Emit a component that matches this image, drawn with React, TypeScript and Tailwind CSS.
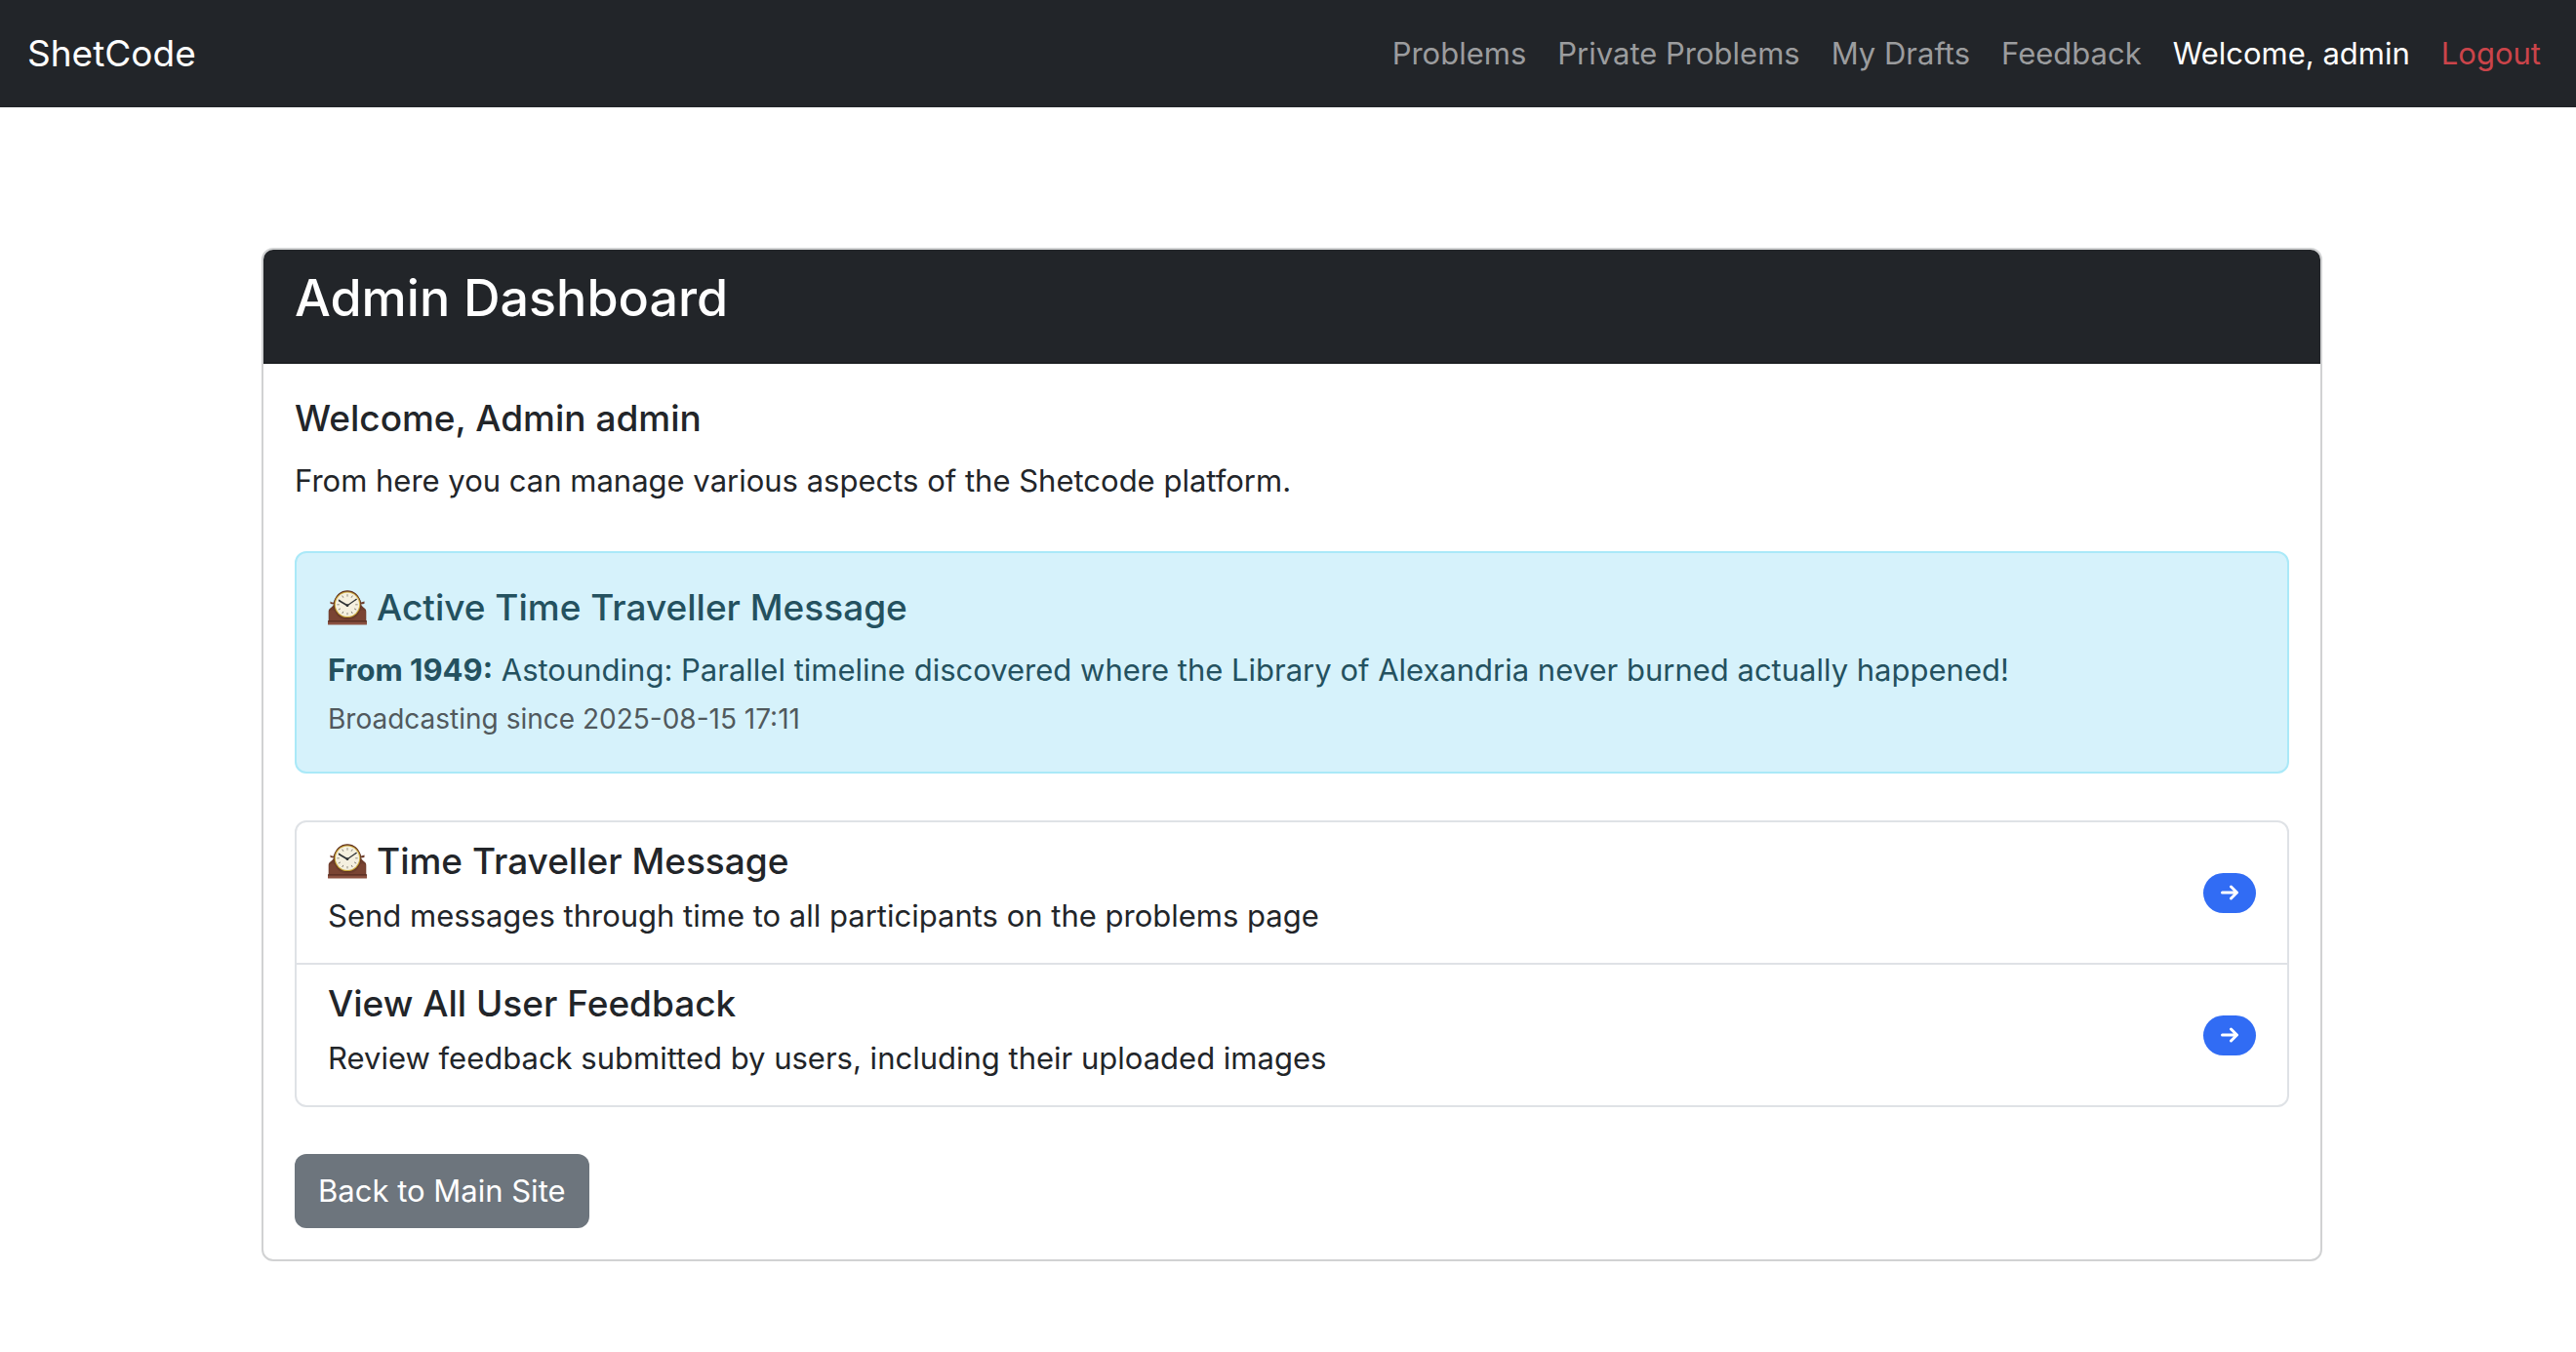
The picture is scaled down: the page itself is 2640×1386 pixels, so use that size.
const navLinks = ["Problems", "Private Problems", "My Drafts", "Feedback"];

const tools = [
  {
    title: "Time Traveller Message",
    text: "Send messages through time to all participants on the problems page",
    clock: true,
  },
  {
    title: "View All User Feedback",
    text: "Review feedback submitted by users, including their uploaded images",
    clock: false,
  },
];

function MantelClock() {
  const ticks = Array.from({ length: 12 }, (_, i) => i * 30);
  return (
    <svg viewBox="0 0 40 36" className="h-9 w-10 shrink-0" aria-hidden="true">
      <path
        d="M4 12.5 2.4 11.6 2.6 14 6 14.6C5 17 3 18 1.6 19.2 .8 20 .7 21 .7 22.500V32H39.300V22.500C39.300 21 39.200 20 38.400 19.200 37 18 35 17 34 14.600L37.400 14 37.600 11.600 34 12.500C32 5 27 .3 20 .3S8 5 6 12.500Z"
        fill="#6e3d2d"
      />
      <path d="M1.500 22C2 20 7 19 8 23 10 28.500 15 30.500 20 30.500S30 28.500 32 23C33 19 38 20 38.500 22V31H1.500Z" fill="#7a4433" />
      <rect x="0" y="31.400" width="40" height="4.200" rx=".6" fill="#8a5140" />
      <rect x="0" y="31.400" width="40" height="1.100" fill="#4f281d" />
      <circle cx="20" cy="14.800" r="14" fill="#5c3020" />
      <circle cx="20" cy="14.800" r="13.300" fill="#c9a63c" />
      <circle cx="20" cy="14.800" r="12.200" fill="#f5f0df" />
      {ticks.map((angle) => (
        <line
          key={angle}
          x1="20"
          y1="4.200"
          x2="20"
          y2="6.600"
          stroke="#77736a"
          strokeWidth=".8"
          transform={`rotate(${angle} 20 14.800)`}
        />
      ))}
      <path d="M11.600 10.800 20 15.700" stroke="#2f3336" strokeWidth="1.700" strokeLinecap="round" />
      <path d="M20 15.700 29.300 9.300" stroke="#2f3336" strokeWidth="1.200" strokeLinecap="round" />
      <circle cx="20" cy="15.700" r="1.400" fill="#2f3336" />
    </svg>
  );
}

function ArrowBadge() {
  return (
    <span className="flex h-[41px] w-[54px] shrink-0 items-center justify-center rounded-full bg-[#316cf4]">
      <svg viewBox="0 0 18 16" className="h-4 w-[18px]" fill="none" stroke="#fff" strokeWidth="3" strokeLinecap="round" strokeLinejoin="round" aria-hidden="true">
        <path d="M1.500 8H16M10.500 2 16.500 8 10.500 14" />
      </svg>
    </span>
  );
}

export default function App() {
  return (
    <div className="min-h-screen bg-white font-['Inter',sans-serif] text-[31px] leading-[48px] text-[#222529]">
      <nav className="flex min-h-[110px] items-center justify-between bg-[#222529] pr-5 pl-7">
        <a href="#" className="text-[37px] text-white">ShetCode</a>
        <ul className="flex items-center">
          {navLinks.map((label) => (
            <li key={label}>
              <a href="#" className="px-4 text-[#9b9c9e]">{label}</a>
            </li>
          ))}
          <li className="px-4 text-white">Welcome, admin</li>
          <li>
            <a href="#" className="px-4 text-[#cb444a]">Logout</a>
          </li>
        </ul>
      </nav>

      <main className="pt-36 pr-[260px] pb-12 pl-[268px]">
        <section className="overflow-hidden rounded-xl border-2 border-[#d1d2d3]">
          <header className="border-b-2 border-[#1d2023] bg-[#222529] px-8 pt-4 pb-8">
            <h1 className="text-[52px] leading-[67px] font-medium text-white">Admin Dashboard</h1>
          </header>

          <div className="p-8">
            <h2 className="mb-4 text-[37px] font-medium">Welcome, Admin admin</h2>
            <p>From here you can manage various aspects of the Shetcode platform.</p>

            <div role="alert" className="mt-12 rounded-xl border-2 border-[#aae9f8] bg-[#d6f2fb] p-8 text-[#24515f]">
              <h2 className="mb-4 flex items-center gap-2.5 text-[37px] font-medium">
                <MantelClock />
                Active Time Traveller Message
              </h2>
              <p>
                <strong className="font-bold">From 1949:</strong> Astounding: Parallel timeline discovered where the
                Library of Alexandria never burned actually happened!
              </p>
              <small className="block pt-1 text-[28px] leading-[44px] text-[#51595d]">
                Broadcasting since 2025-08-15 17:11
              </small>
            </div>

            <ul className="mt-12 divide-y-2 divide-[#dfe2e6] rounded-xl border-2 border-[#dfe2e6]">
              {tools.map((tool) => (
                <li key={tool.title}>
                  <a href="#" className="flex items-center justify-between px-8 py-4">
                    <span className="block pb-2">
                      <span className="mb-2 flex items-center gap-2.5 text-[37px] font-medium">
                        {tool.clock && <MantelClock />}
                        {tool.title}
                      </span>
                      <span className="block">{tool.text}</span>
                    </span>
                    <ArrowBadge />
                  </a>
                </li>
              ))}
            </ul>

            <a href="#" className="mt-12 block w-fit rounded-xl bg-[#6d757d] px-6 py-3.5 text-white">
              Back to Main Site
            </a>
          </div>
        </section>
      </main>
    </div>
  );
}
